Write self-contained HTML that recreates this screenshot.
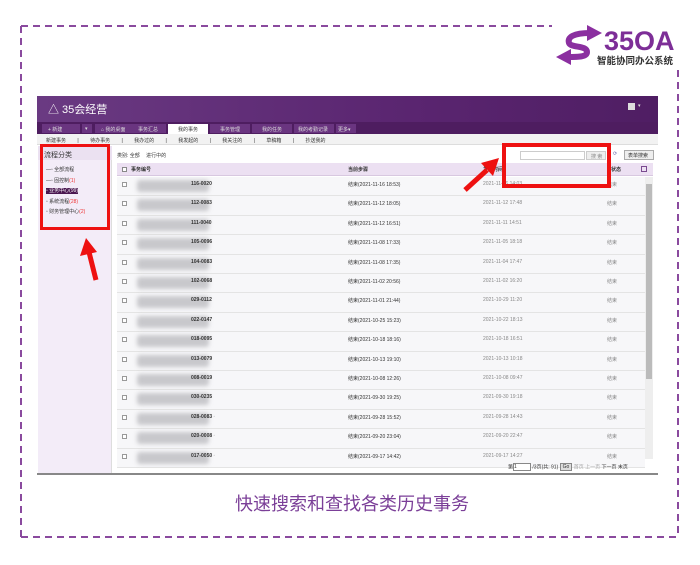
<!DOCTYPE html>
<html><head><meta charset="utf-8"><style>
*{margin:0;padding:0;box-sizing:border-box}
body{width:700px;height:565px;background:#fff;position:relative;overflow:hidden;font-family:"Liberation Sans","Noto Sans CJK SC",sans-serif}
.a{position:absolute}
.t{font-size:5px;color:#333;white-space:nowrap}
.row{position:absolute;left:117px;width:528px;height:19.4px;border-bottom:1px solid #e4e4e4;background:#f7f7f9}
.blur{position:absolute;left:20px;top:3px;width:72px;height:12px;background:#c8c8cc;filter:blur(2px);border-radius:3px}
.cb{position:absolute;left:5px;top:5px;width:5px;height:5px;border:1px solid #999;background:#fff}
</style></head><body>
<svg class="a" style="left:0;top:0" width="700" height="565">
<g stroke="#8a4a9e" stroke-width="2" stroke-dasharray="7,5" fill="none">
<line x1="21" y1="26" x2="552" y2="26"/>
<line x1="21" y1="26" x2="21" y2="537"/>
<line x1="21" y1="537" x2="678" y2="537"/>
<line x1="678" y1="70" x2="678" y2="537"/>
</g>
<g fill="none" stroke="#8b2fa0" stroke-width="6" stroke-linecap="round">
<path d="M590 33 C574 33 567 37 569 43 C571 48 587 45 587 52 C587 57 578 57 568 57"/>
</g>
<polygon points="587,25 602,33 587,41" fill="#8b2fa0"/>
<polygon points="571,49 556,57 571,65" fill="#8b2fa0"/>
</svg>
<div class="a" style="left:604px;top:26px;font-size:27px;font-weight:bold;color:#7d2e97">35OA</div>
<div class="a" style="left:597px;top:53px;font-size:9.5px;font-weight:bold;color:#333;white-space:nowrap">智能协同办公系统</div>

<div class="a" style="left:37px;top:96px;width:621px;height:379px;background:#fff;border-bottom:2px solid #888"></div>
<div class="a" style="left:37px;top:96px;width:621px;height:26px;background:linear-gradient(90deg,#6a3a82,#5a2570 60%,#4f1e63)"></div>
<div class="a" style="left:48px;top:101px;font-size:11px;color:#fff;white-space:nowrap">△ 35会经营</div>
<div class="a" style="left:628px;top:103px;width:7px;height:7px;background:#ddd"></div>
<div class="a t" style="left:638px;top:103px;color:#ddd">▾</div>
<div class="a" style="left:37px;top:122px;width:621px;height:12px;background:#4e1d60"></div>
<div class="a" style="left:42px;top:124px;width:310px;height:10px">
<div class="a t" style="left:0;width:38px;height:9px;background:#6a3580;color:#ddd;padding:2px 6px">+ 新建</div>
<div class="a t" style="left:40px;width:10px;height:9px;background:#6a3580;color:#ddd;padding:2px 3px">▾</div>
<div class="a t" style="left:53px;width:48px;height:9px;background:#6a3580;color:#ddd;padding:2px 6px">⌂ 我的桌面</div>
<div class="a t" style="left:84px;width:40px;height:9px;background:#6a3580;color:#ddd;padding:2px 12px">事务汇总</div>
<div class="a t" style="left:126px;width:40px;height:10px;background:#fff;padding:2px 10px">我的事务</div>
<div class="a t" style="left:168px;width:40px;height:9px;background:#6a3580;color:#ddd;padding:2px 10px">事务管理</div>
<div class="a t" style="left:210px;width:40px;height:9px;background:#6a3580;color:#ddd;padding:2px 10px">我的任务</div>
<div class="a t" style="left:252px;width:40px;height:9px;background:#6a3580;color:#ddd;padding:2px 4px">我的考勤记录</div>
<div class="a t" style="left:294px;width:20px;height:9px;background:#6a3580;color:#ddd;padding:2px 2px">更多▾</div>
</div>
<div class="a" style="left:37px;top:134px;width:621px;height:11px;background:#f2f2f2;border-bottom:1px solid #ddd"></div>
<div class="a t" style="left:46px;top:137px;word-spacing:10px">新建事务 | 待办事务 | 我办过的 | 我发起的 | 我关注的 | 草稿箱 | 抄送我的</div>
<div class="a" style="left:38px;top:146px;width:74px;height:327px;background:#f3ecf8;border-right:1px solid #ddd"></div>
<div class="a" style="left:38px;top:146px;width:74px;height:14px;background:#ebe1f1"></div>
<div class="a" style="left:44px;top:150px;font-size:7px;color:#333">流程分类</div>
<div class="a t" style="left:46px;top:165px;line-height:10.5px">—▫ 全部流程<br>—▫ 固控制<span style="color:#e33">(1)</span><br><span style="background:#4a1650;color:#fff">▫ 业务中心(99)</span><br>▫ 系统流程<span style="color:#e33">(28)</span><br>▫ 财务管理中心<span style="color:#e33">(2)</span></div>
<div class="a t" style="left:117px;top:152px">类别: 全部 　进行中的</div>
<div class="a" style="left:520px;top:151px;width:65px;height:9px;border:1px solid #ccc;background:#fff"></div>
<div class="a t" style="left:586px;top:151px;width:20px;height:9px;background:#eee;border:1px solid #ccc;padding:1px 4px;color:#888">搜 索</div>
<div class="a t" style="left:613px;top:151px;color:#66a">⟳</div>
<div class="a t" style="left:624px;top:150px;width:30px;height:10px;background:#eee;border:1px solid #aaa;padding:1px 3px">表单搜索</div>
<div class="a" style="left:117px;top:163px;width:536px;height:13px;background:#ece0f2;border-bottom:1px solid #d8c8e0"></div>
<div class="a" style="left:122px;top:167px;width:5px;height:5px;border:1px solid #888;background:#fff"></div>
<div class="a t" style="left:131px;top:166px;font-weight:bold">事务编号</div>
<div class="a t" style="left:348px;top:166px;font-weight:bold">当前步骤</div>
<div class="a t" style="left:483px;top:166px;font-weight:bold">发起时间</div>
<div class="a t" style="left:611px;top:166px;font-weight:bold">状态</div>
<div class="a" style="left:641px;top:166px;width:6px;height:6px;border:1px solid #7a4a90"></div>
<div class="a" style="left:645px;top:177px;width:8px;height:282px;background:#eee"></div>
<div class="a" style="left:646px;top:184px;width:6px;height:195px;background:#bbb"></div>
<div id="rows"></div>
<script>
var d=[["116-0020","2021-11-16 18:53","2021-11-16 14:03"],["112-0083","2021-11-12 18:05","2021-11-12 17:48"],["111-0040","2021-11-12 16:51","2021-11-11 14:51"],["105-0096","2021-11-08 17:33","2021-11-05 18:18"],["104-0083","2021-11-08 17:35","2021-11-04 17:47"],["102-0068","2021-11-02 20:56","2021-11-02 16:20"],["029-0112","2021-11-01 21:44","2021-10-29 11:20"],["022-0147","2021-10-25 15:23","2021-10-22 18:13"],["018-0095","2021-10-18 18:16","2021-10-18 16:51"],["013-0079","2021-10-13 19:10","2021-10-13 10:18"],["008-0019","2021-10-08 12:26","2021-10-08 09:47"],["030-0235","2021-09-30 19:25","2021-09-30 19:18"],["028-0083","2021-09-28 15:52","2021-09-28 14:43"],["020-0008","2021-09-20 23:04","2021-09-20 22:47"],["017-0050","2021-09-17 14:42","2021-09-17 14:27"]];
var h="";d.forEach(function(r,i){var y=177+i*19.4;h+='<div class="row" style="top:'+y+'px"><div class="cb"></div><div class="blur"></div><div class="a t" style="left:74px;top:4px;font-weight:bold">'+r[0]+(i>11?' <span style="color:#aaa">◦</span>':'')+'</div><div class="a t" style="left:231px;top:4px">结束('+r[1]+')</div><div class="a t" style="left:366px;top:4px;color:#888">'+r[2]+'</div><div class="a t" style="left:490px;top:4px;color:#888">结束</div></div>'});
document.getElementById("rows").innerHTML=h;
</script>
<div class="a t" style="left:508px;top:463px">第<span style="display:inline-block;width:18px;height:8px;border:1px solid #888;vertical-align:middle;background:#fff">1</span> /3页(共: 91) <span style="border:1px solid #888;background:#ddd;padding:0 2px">Go</span> <span style="color:#aaa">首页 上一页</span> 下一页 末页</div>
<div class="a" style="left:40px;top:144px;width:70px;height:86px;border:3px solid #ee1111"></div>
<div class="a" style="left:502px;top:143px;width:109px;height:45px;border:4px solid #ee1111"></div>
<svg class="a" style="left:0;top:0" width="700" height="565">
<line x1="96" y1="280" x2="89" y2="252" stroke="#ee1111" stroke-width="5"/>
<polygon points="80,256 86,238 97,252" fill="#ee1111"/>
<line x1="465" y1="190" x2="487" y2="170" stroke="#ee1111" stroke-width="5"/>
<polygon points="481,163 499,158 493,176" fill="#ee1111"/>
</svg>
<div class="a" style="left:235px;top:490px;font-size:18px;color:#7b3f98;white-space:nowrap">快速搜索和查找各类历史事务</div>
</body></html>
